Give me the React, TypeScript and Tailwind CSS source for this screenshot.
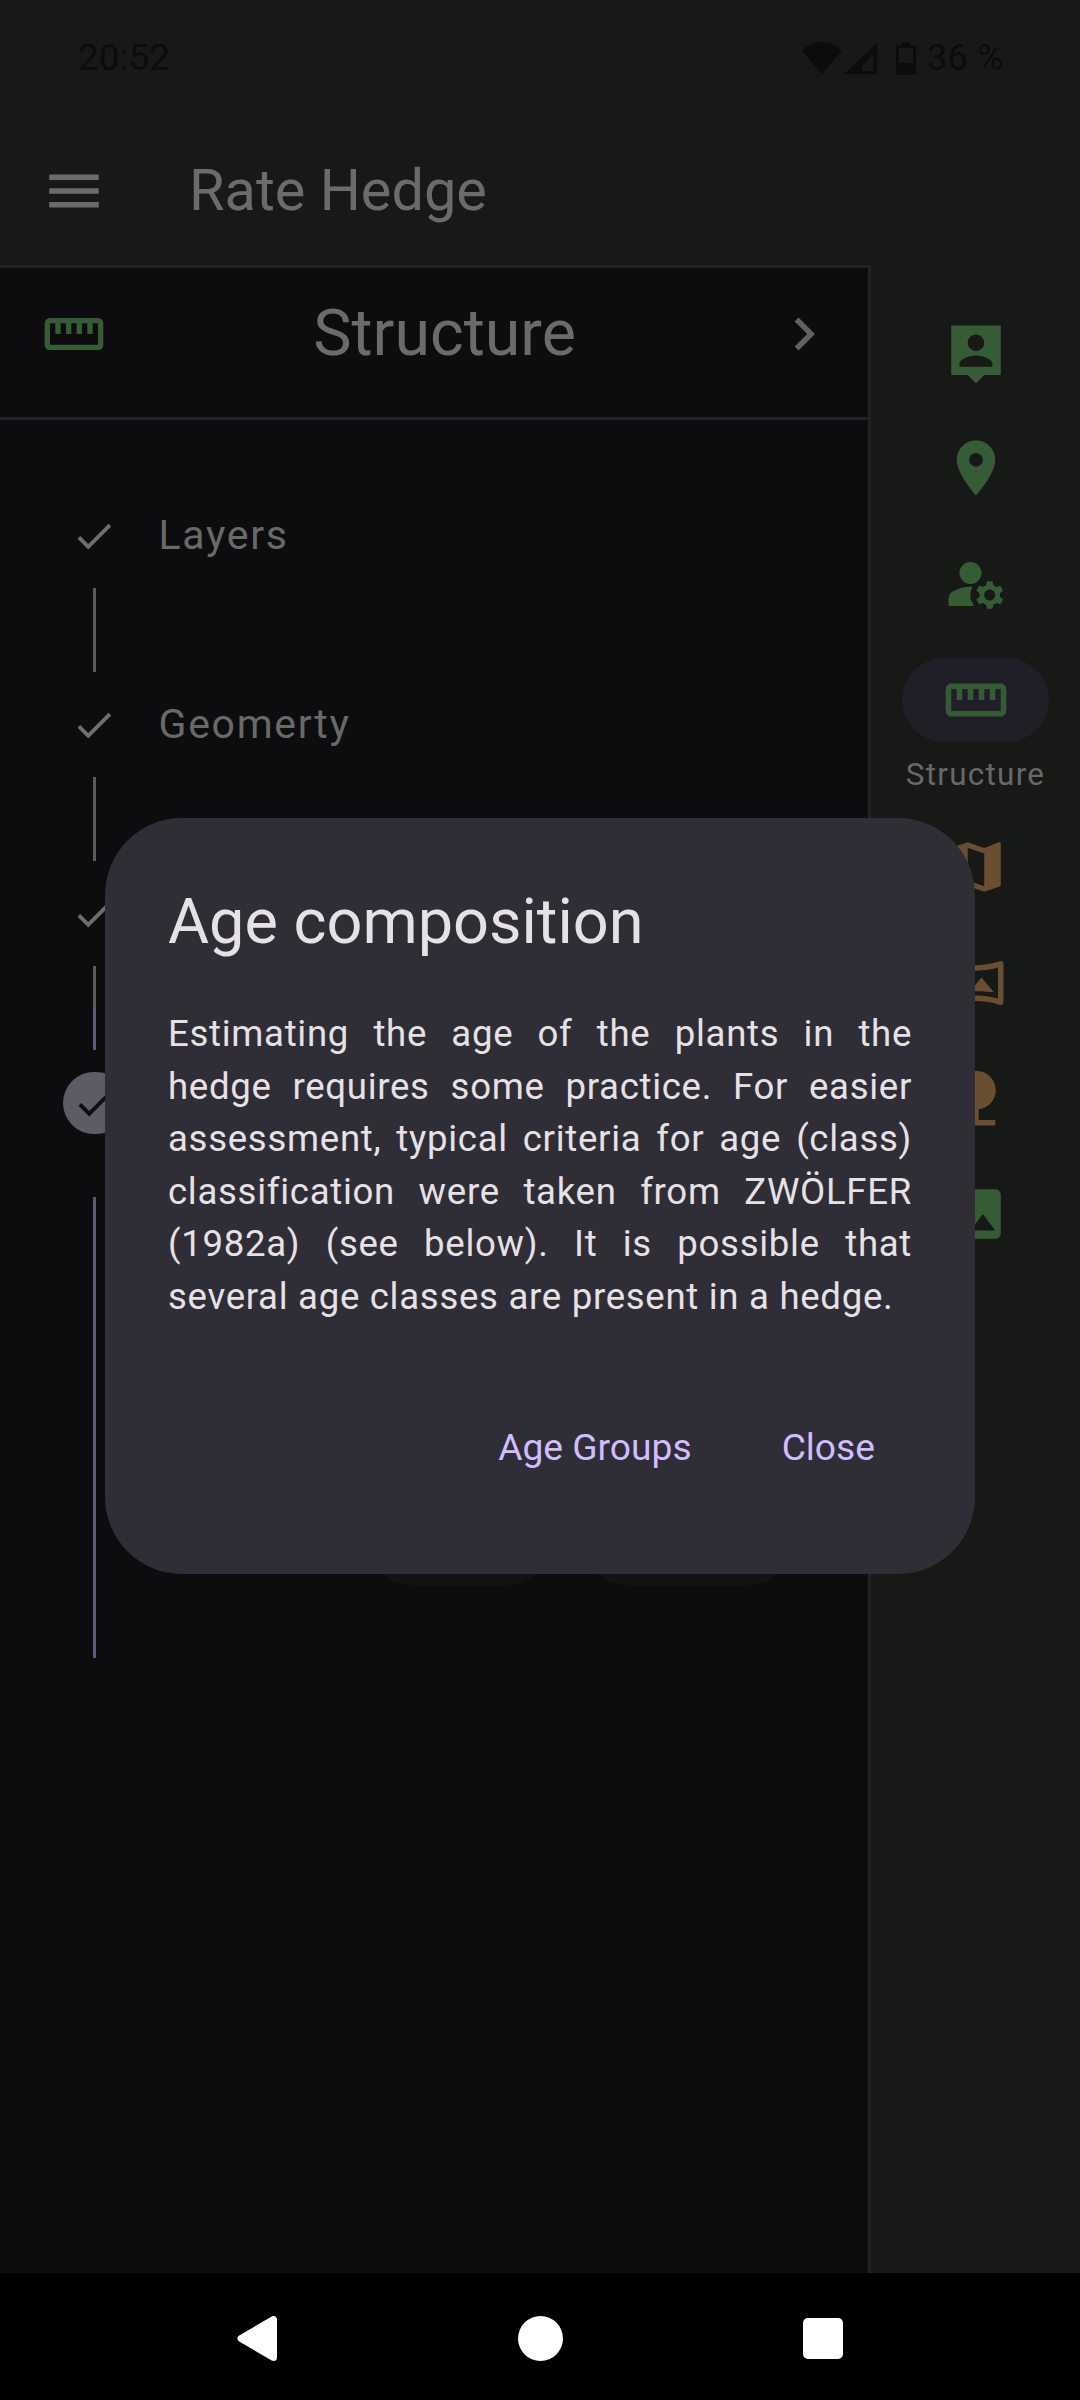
import { MdCheck, MdChevronRight, MdImage, MdManageAccounts, MdMap, MdMenu, MdNature, MdOutlineStraighten, MdOutlineVrpano, MdPlace } from 'react-icons/md';

const GREEN = 'text-[#365c36]';
const BROWN = 'text-[#6a4e31]';

function PersonPin() {
  return (
    <svg viewBox="0 0 24 24" className="h-[66px] w-[66px]" fill="currentColor">
      <path
        fillRule="evenodd"
        d="M21 2H3v18h6l3 3 3-3h6V2zM12 5.3c1.66 0 3 1.34 3 3s-1.34 3-3 3-3-1.34-3-3 1.34-3 3-3zM18 17H6v-1c0-2 4-3.1 6-3.1s6 1.1 6 3.1v1z"
      />
    </svg>
  );
}

function StatusIcons() {
  return (
    <div className="flex items-center">
      <svg viewBox="0 0 40 32" className="h-[32px] w-[40px]" fill="#0b0c0b">
        <path d="M20 32 0 9C4 4 11 0 20 0s16 4 20 9z" />
      </svg>
      <svg viewBox="0 0 33 31" className="ml-[2px] h-[31px] w-[33px]" fill="#0b0c0b">
        <path fillRule="evenodd" d="M33 0v31H0zM29.500 11 18 22.500V28h11.500z" />
      </svg>
      <svg viewBox="0 0 20 33" className="ml-[19px] h-[33px] w-[20px]" fill="#0b0c0b">
        <path fillRule="evenodd" d="M6 0h8v3h4a2 2 0 0 1 2 2v26a2 2 0 0 1-2 2H2a2 2 0 0 1-2-2V5a2 2 0 0 1 2-2h4zM3 6v15h14V6z" />
      </svg>
    </div>
  );
}

function RailItem({ children }: { children: React.ReactNode }) {
  return <div className="flex h-[115.5px] items-center justify-center">{children}</div>;
}

function DoneStep({ label }: { label?: string }) {
  return (
    <>
      <div className="flex h-[105px] items-center pl-[71px]">
        <MdCheck className="h-[46px] w-[46px] text-[#6e6e6e]" />
        {label && <span className="ml-[41.500px] text-[41px] tracking-[1.700px] text-[#696969]">{label}</span>}
      </div>
      <div className="ml-[93px] h-[84px] w-[2.75px] bg-[#5c5c5c]" />
    </>
  );
}

export default function App() {
  return (
    <div className="relative flex h-[2400px] w-[1080px] flex-col overflow-hidden bg-[#171916] font-['Roboto',sans-serif]">
      {/* status bar */}
      <div className="flex h-[116px] shrink-0 items-center justify-between pl-[78px] pr-[76px] text-[#0b0c0b]">
        <span className="text-[37px]">20:52</span>
        <div className="flex items-center">
          <StatusIcons />
          <span className="ml-[11px] text-[36px] tracking-[0.3px]">36 %</span>
        </div>
      </div>

      {/* app bar */}
      <div className="flex h-[149px] shrink-0 items-center pl-[41px]">
        <MdMenu className="h-[66px] w-[66px] text-[#6b6b6b]" />
        <span className="ml-[82px] text-[57.700px] text-[#6b6b6b]">Rate Hedge</span>
      </div>

      <div className="flex min-h-0 flex-1">
        {/* stepper panel */}
        <div className="flex w-[871px] flex-col border-r-[3px] border-t-[3px] border-[#212326] bg-[#0d0d0f]">
          <div className="flex h-[152px] shrink-0 items-center justify-between border-b-[3px] border-[#202225] pb-[18px] pl-[42px] pr-[31px]">
            <MdOutlineStraighten className={`h-[64px] w-[64px] ${GREEN}`} />
            <span className="ml-[12px] text-[64.500px] text-[#6b6b6b]">Structure</span>
            <MdChevronRight className="h-[66px] w-[66px] text-[#616161]" />
          </div>

          <div className="flex flex-col pt-[63px]">
            <DoneStep label="Layers" />
            <DoneStep label="Geomerty" />
            <div className="flex h-[105px] items-center pl-[71px]">
              <MdCheck className="h-[46px] w-[46px] text-[#6e6e6e]" />
            </div>
            <div className="ml-[93px] flex h-[84px] w-[2.75px] flex-col">
              <div className="h-[42px] bg-[#5c5c5c]" />
              <div className="h-[42px] bg-[#5d5a78]" />
            </div>

            {/* active step */}
            <div className="flex h-[106px] items-center pl-[63px]">
              <div className="flex h-[62px] w-[64px] items-center justify-center rounded-full bg-[#5e5b66]">
                <MdCheck className="h-[46px] w-[46px] text-[#0d0e10]" />
              </div>
            </div>
            <div className="mt-[41px] flex h-[461px]">
              <div className="ml-[93px] h-full w-[2.75px] bg-[#5d5a78]" />
              <div className="ml-[275px] flex gap-[38px] pt-[273px]">
                <div className="h-[115px] w-[177px] rounded-[40px] bg-[#131315]" />
                <div className="h-[115px] w-[203px] rounded-[40px] bg-[#131315]" />
              </div>
            </div>
          </div>
        </div>

        {/* navigation rail */}
        <div className="flex flex-1 flex-col pt-[30px]">
          <RailItem>
            <span className={GREEN}>
              <PersonPin />
            </span>
          </RailItem>
          <RailItem>
            <MdPlace className={`h-[66px] w-[66px] ${GREEN}`} />
          </RailItem>
          <RailItem>
            <MdManageAccounts className={`h-[66px] w-[66px] ${GREEN}`} />
          </RailItem>
          <div className="flex h-[168px] flex-col items-center pt-[16px]">
            <div className="flex h-[84px] w-[147px] items-center justify-center rounded-full bg-[#201f28]">
              <MdOutlineStraighten className={`h-[66px] w-[66px] ${GREEN}`} />
            </div>
            <span className="mt-[9px] text-[31.400px] tracking-[1.300px] text-[#686868]">Structure</span>
          </div>
          <RailItem>
            <MdMap className={`h-[66px] w-[66px] ${BROWN}`} />
          </RailItem>
          <RailItem>
            <MdOutlineVrpano className={`h-[66px] w-[66px] ${BROWN}`} />
          </RailItem>
          <RailItem>
            <MdNature className={`h-[66px] w-[66px] ${BROWN}`} />
          </RailItem>
          <RailItem>
            <MdImage className={`h-[66px] w-[66px] ${GREEN}`} />
          </RailItem>
        </div>
      </div>

      {/* android nav bar */}
      <div className="flex h-[127px] shrink-0 items-center bg-black pl-[237px] pt-[3px]">
        <svg viewBox="0 0 40 45" className="h-[45px] w-[40px]" fill="white" stroke="white" strokeWidth="7" strokeLinejoin="round">
          <path d="M4 22.500 36.500 3.500v38z" />
        </svg>
        <div className="ml-[241px] h-[45px] w-[45px] rounded-full bg-white" />
        <div className="ml-[240px] h-[41px] w-[40px] rounded-[5px] bg-white" />
      </div>

      {/* dialog */}
      <div className="absolute left-[105px] top-[818px] flex h-[756px] w-[870px] flex-col rounded-[77px] bg-[#2f2d36] px-[63px] pt-[60px] text-[#e6e1e5]">
        <h2 className="text-[63px] leading-[88px]">Age composition</h2>
        <p className="mt-[42px] text-justify text-[36.600px] leading-[52.500px] tracking-[0.7px]">
          Estimating the age of the plants in the hedge requires some practice. For easier assessment, typical criteria for age (class) classification were taken from ZWÖLFER (1982a) (see below). It is possible that several age classes are present in a hedge.
        </p>
        <div className="mt-[70px] flex justify-end gap-[24px] pr-[4px] text-[37.200px] text-[#d0bcff]">
          <button className="h-[110px] px-[33px]">Age Groups</button>
          <button className="h-[110px] px-[33px]">Close</button>
        </div>
      </div>
    </div>
  );
}
